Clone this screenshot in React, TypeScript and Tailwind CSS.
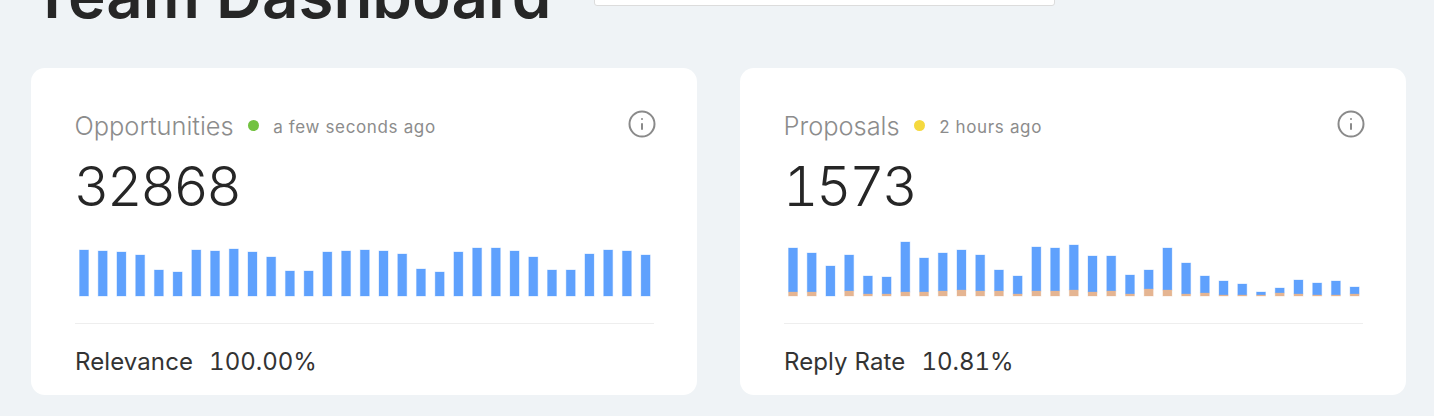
import React from 'react';
import { Info } from 'lucide-react';

const FONT = 'font-["Inter",sans-serif]';

// [blue, orange] heights in px, bottom aligned
const opportunityBars: [number, number][] = [46, 45, 44, 41, 26, 24, 46, 45, 47, 44, 39, 25, 25, 44, 45, 46, 45, 42, 27, 24, 44, 48, 48, 45, 39, 26, 26, 42, 46, 45, 41].map(h => [h, 0]);

const proposalBars: [number, number][] = [
    [44, 4], [39, 4], [30, 0], [36, 5], [18, 2], [17, 2], [50, 4], [34, 4], [38, 5], [40, 6], [36, 5], [21, 5], [18, 2], [44, 5], [43, 5], [45, 6],
    [36, 4], [35, 5], [19, 2], [19, 7], [42, 6], [31, 2], [17, 3], [14, 1], [11, 1], [3, 1], [5, 3], [14, 2], [12, 1], [14, 1], [7, 2],
];

const BarChart = ({ bars }: { bars: [number, number][] }) => (
    <svg width="579" height="60" viewBox="0 0 579 60" className="block">
        {bars.map(([blue, orange], i) => {
            const x = 4.5 + i * 18.72;
            return (
                <g key={i}>
                    <rect x={x} y={56 - blue - orange} width={9} height={blue} fill="#5fa1fd" stroke="#5fa1fd" strokeOpacity={0.3} />
                    {orange > 0 && <rect x={x} y={56 - orange} width={9} height={orange} fill="#e5b592" stroke="#e5b592" strokeOpacity={0.3} />}
                </g>
            );
        })}
    </svg>
);

interface CardProps {
    title: string;
    dot: string;
    updated: string;
    value: string;
    bars: [number, number][];
    metric: string;
    metricValue: string;
}

const StatCard = ({ title, dot, updated, value, bars, metric, metricValue }: CardProps) => (
    <div className="bg-white rounded-[14px] h-[327px] pt-[41px] pl-[44px] pr-[43px]">
        <div className="flex items-start justify-between h-[32px]">
            <div className="flex items-center -ml-[0.5px]">
                <span className="text-[25.4px] leading-[32px] text-[#8c8c8c] font-light">{title}</span>
                <span className={`w-[11px] h-[11px] rounded-full ml-[14.5px] mb-[2px] ${dot}`}></span>
                <span className="text-[17px] leading-[32px] tracking-[0.65px] text-[#8c8c8c] ml-[14px] mt-[2px]">{updated}</span>
            </div>
            <Info size={30} strokeWidth={1.6} className="text-[#8a8a8a] -mr-[3px]" />
        </div>
        <div className="text-[55px] leading-[60px] font-light tabular-nums tracking-[-2.5px] text-[#262626] mt-[15px] -ml-[1px]">{value}</div>
        <div className="mt-[24px]">
            <BarChart bars={bars} />
        </div>
        <div className="border-t border-[#eeeeee] mt-[23px] pt-[22px] text-[24px] leading-[32px] text-[#333333] flex gap-[16px]">
            <span className="tracking-[0.1px]">{metric}</span>
            <span className="tabular-nums">{metricValue}</span>
        </div>
    </div>
);

export default function App() {
    return (
        <div className={`${FONT} bg-[#eff3f6] h-[416px] overflow-hidden pl-[31px] pr-[28px]`}>
            <div className="flex items-end h-[96px] -mt-[28px]">
                <h1 className="text-[63.6px] leading-[76px] font-semibold text-[#262626] w-[563px] mb-[35px] whitespace-nowrap">Team Dashboard</h1>
                <div className="w-[461px] h-[40px] bg-white border border-[#dcdcdc] rounded-[3px] mb-[62px]"></div>
            </div>
            <div className="grid grid-cols-2 gap-[43px]">
                <StatCard title="Opportunities" dot="bg-[#72c240]" updated="a few seconds ago" value="32868" bars={opportunityBars} metric="Relevance" metricValue="100.00%" />
                <StatCard title="Proposals" dot="bg-[#f5d93e]" updated="2 hours ago" value="1573" bars={proposalBars} metric="Reply Rate" metricValue="10.81%" />
            </div>
        </div>
    );
}
